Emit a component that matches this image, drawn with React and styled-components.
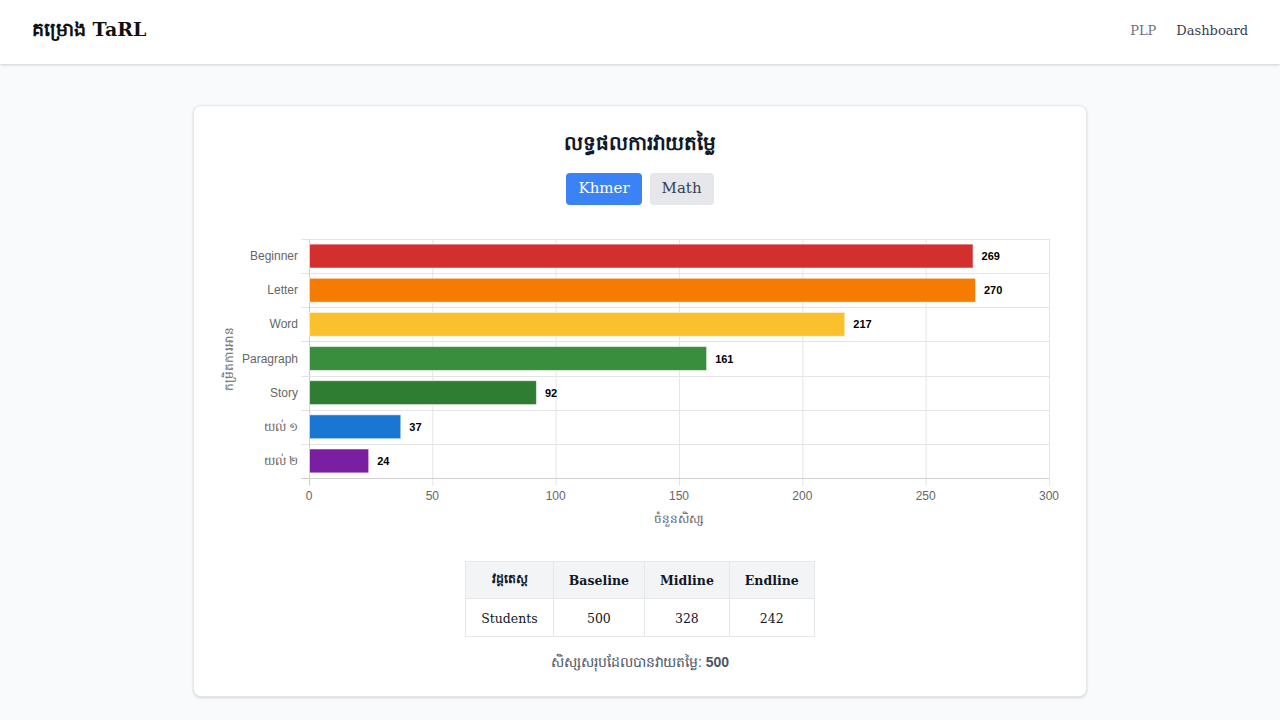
import React, { useState } from "react";
import styled, { createGlobalStyle } from "styled-components";

const GlobalStyle = createGlobalStyle`
  body {
    margin: 0;
    background: #f9fafb;
    font-family: "DejaVu Serif", "Liberation Serif", serif;
    color: #111827;
  }
`;

const Header = styled.header`
  height: 64px;
  background: #fff;
  box-shadow: 0 1px 3px rgba(0, 0, 0, 0.12), 0 1px 2px rgba(0, 0, 0, 0.06);
  display: flex;
  align-items: center;
  justify-content: space-between;
  padding: 0 32px;
`;

const Logo = styled.div`
  font-size: 19px;
  font-weight: 700;
  color: #111;
  padding-bottom: 2px;
`;

const Nav = styled.nav`
  display: flex;
  gap: 20px;
  font-size: 13px;
  padding-bottom: 4px;
`;

const NavLink = styled.a`
  color: ${(p) => (p.active ? "#374151" : "#6b7280")};
  text-decoration: none;
`;

const Main = styled.main`
  padding: 41px 16px 24px;
`;

const Card = styled.section`
  max-width: 846px;
  margin: 0 auto;
  background: #fff;
  border: 1px solid #e5e7eb;
  border-radius: 8px;
  box-shadow: 0 1px 3px rgba(0, 0, 0, 0.1), 0 1px 2px rgba(0, 0, 0, 0.06);
  padding: 23px 23px 24px;
  display: flex;
  flex-direction: column;
  align-items: center;
`;

const Title = styled.h2`
  margin: 0;
  font-size: 20px;
  line-height: 28px;
  font-weight: 700;
`;

const Tabs = styled.div`
  display: flex;
  gap: 8px;
  margin-top: 16px;
`;

const Tab = styled.button`
  height: 32px;
  padding: 0 12px 2px;
  border: none;
  border-radius: 4px;
  font-family: inherit;
  font-size: 15px;
  cursor: pointer;
  background: ${(p) => (p.active ? "#3b82f6" : "#e5e7eb")};
  color: ${(p) => (p.active ? "#fff" : "#374151")};
`;

const ChartBox = styled.div`
  width: 100%;
  margin-top: 24px;
  svg {
    display: block;
  }
`;

const Table = styled.table`
  margin-top: 22px;
  border-collapse: collapse;
  font-size: 12.5px;
  th,
  td {
    border: 1px solid #e5e7eb;
    padding: 0 15px;
    height: 36px;
    text-align: center;
  }
  th {
    background: #f3f4f6;
    font-weight: 700;
  }
  td {
    padding-top: 1px;
  }
`;

const Summary = styled.p`
  margin: 15px 0 0;
  font-size: 14px;
  line-height: 20px;
  color: #4b5563;
  font-family: "Liberation Sans", sans-serif;
  b {
    font-weight: 700;
  }
`;

const levels = [
  { label: "Beginner", value: 269, color: "#d32f2f" },
  { label: "Letter", value: 270, color: "#f57c00" },
  { label: "Word", value: 217, color: "#fbc02d" },
  { label: "Paragraph", value: 161, color: "#388e3c" },
  { label: "Story", value: 92, color: "#2e7d32" },
  { label: "យល់ ១", value: 37, color: "#1976d2" },
  { label: "យល់ ២", value: 24, color: "#7b1fa2" },
];

const W = 846;
const H = 310;
const left = 92;
const right = 832;
const top = 10;
const bottom = 249;
const max = 300;

function BarChart({ data }) {
  const band = (bottom - top) / data.length;
  const barH = band * 0.7;
  const xs = (v) => left + ((right - left) * v) / max;
  const ticks = [0, 50, 100, 150, 200, 250, 300];
  const font = '"Liberation Sans", Arial, sans-serif';

  return (
    <svg width={W} height={H} fontFamily={font}>
      {ticks.map((t) => (
        <g key={t}>
          <line x1={xs(t) + 0.5} x2={xs(t) + 0.5} y1={top} y2={bottom + 8} stroke="#e5e5e5" />
          <text x={xs(t)} y={271} fontSize="12" fill="#666" textAnchor="middle">
            {t}
          </text>
        </g>
      ))}
      {data.map((_, i) => (
        <line
          key={"g" + i}
          x1={left - 8}
          x2={right}
          y1={Math.round(top + band * i) + 0.5}
          y2={Math.round(top + band * i) + 0.5}
          stroke="#e5e5e5"
        />
      ))}
      <line x1={left - 8} x2={right} y1={bottom + 0.5} y2={bottom + 0.5} stroke="#d0d0d0" />
      <line x1={left + 0.5} x2={left + 0.5} y1={top} y2={bottom + 8} stroke="#d0d0d0" />
      {data.map((d, i) => {
        const cy = top + band * i + band / 2;
        return (
          <g key={d.label}>
            <rect
              x={left + 0.5}
              y={cy - barH / 2}
              width={xs(d.value) - left}
              height={barH}
              fill={d.color}
              stroke="rgba(255,255,255,0.55)"
              strokeWidth="1"
            />
            <text x={81} y={cy + 4} fontSize="12" fill="#666" textAnchor="end">
              {d.label}
            </text>
            <text x={xs(d.value) + 9} y={cy + 4} fontSize="11" fontWeight="700" fill="#000">
              {d.value}
            </text>
          </g>
        );
      })}
      <text x={(left + right) / 2} y={294} fontSize="12" fill="#666" textAnchor="middle">
        ចំនួនសិស្ស
      </text>
      <text
        x={0}
        y={0}
        fontSize="12"
        fill="#666"
        textAnchor="middle"
        transform={`translate(16 ${(top + bottom) / 2}) rotate(-90)`}
      >
        កម្រិតការអាន
      </text>
    </svg>
  );
}

export default function App() {
  const [subject, setSubject] = useState("khmer");
  return (
    <>
      <GlobalStyle />
      <Header>
        <Logo>គម្រោង TaRL</Logo>
        <Nav>
          <NavLink href="#">PLP</NavLink>
          <NavLink href="#" active>
            Dashboard
          </NavLink>
        </Nav>
      </Header>
      <Main>
        <Card>
          <Title>លទ្ធផលការវាយតម្លៃ</Title>
          <Tabs>
            <Tab active={subject === "khmer"} onClick={() => setSubject("khmer")}>
              Khmer
            </Tab>
            <Tab active={subject === "math"} onClick={() => setSubject("math")}>
              Math
            </Tab>
          </Tabs>
          <ChartBox>
            <BarChart data={levels} />
          </ChartBox>
          <Table>
            <thead>
              <tr>
                <th>វដ្តតេស្ត</th>
                <th>Baseline</th>
                <th>Midline</th>
                <th>Endline</th>
              </tr>
            </thead>
            <tbody>
              <tr>
                <td>Students</td>
                <td>500</td>
                <td>328</td>
                <td>242</td>
              </tr>
            </tbody>
          </Table>
          <Summary>
            សិស្សសរុបដែលបានវាយតម្លៃ: <b>500</b>
          </Summary>
        </Card>
      </Main>
    </>
  );
}
